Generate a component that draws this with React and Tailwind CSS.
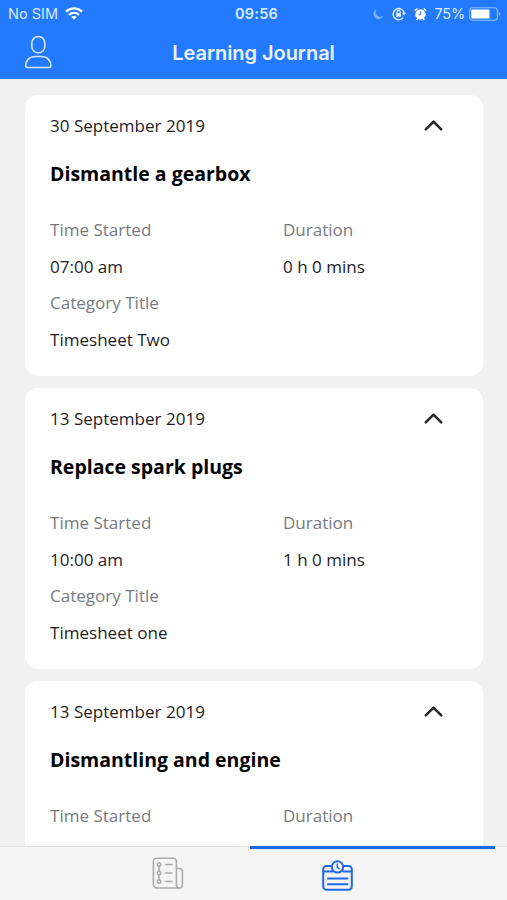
import React from 'react';
import { ChevronUp } from 'lucide-react';

const entries = [
    { id: 1, date: '30 September 2019', title: 'Dismantle a gearbox', started: '07:00 am', duration: '0 h 0 mins', category: 'Timesheet Two' },
    { id: 2, date: '13 September 2019', title: 'Replace spark plugs', started: '10:00 am', duration: '1 h 0 mins', category: 'Timesheet one' },
    { id: 3, date: '13 September 2019', title: 'Dismantling and engine' },
];

const StatusBar = () => (
    <div className="h-7 grid grid-cols-3 items-center pl-2 pr-[6px] text-[14.5px] leading-none text-[#d9e9ff]">
        <div className="flex items-center gap-[7px]">
            <span className="whitespace-nowrap">No SIM</span>
            <svg className="-mt-[2px]" width="18" height="13" viewBox="0 0 18 13" fill="none" stroke="#fff" strokeWidth="2.3">
                <path d="M1 4.6C5.5.3 12.5.3 17 4.6" />
                <path d="M4 7.9c2.9-2.6 7.1-2.6 10 0" />
                <path d="M9 12.6 6.3 10c1.5-1.5 3.9-1.5 5.4 0z" fill="#fff" stroke="none" />
            </svg>
        </div>
        <span className="text-center font-semibold tracking-[0.2px] pl-[4px]">09:56</span>
        <div className="flex items-center justify-end">
            <svg className="mr-[8px] shrink-0" width="11" height="12" viewBox="0 0 11 12" fill="#7db2ff">
                <path d="M3.6 1A5.2 5.2 0 1 0 10.4 8 5 5 0 0 1 3.6 1z" />
            </svg>
            <svg className="-mt-px mr-[8px] shrink-0" width="14" height="14" viewBox="0 0 14 14" fill="none" stroke="#e3efff" strokeWidth="1.4">
                <path d="M11.2 10.6A5.6 5.6 0 1 1 12.2 5.8" />
                <path d="M9.8 5.7h4.2l-2 2.8z" fill="#e3efff" stroke="none" />
                <path d="M5 6V5a1.6 1.6 0 0 1 3.2 0v1" strokeWidth="1.1" />
                <rect x="4.2" y="6" width="4.8" height="3.8" rx=".5" fill="#e3efff" stroke="none" />
            </svg>
            <svg className="-mt-px mr-[7px] shrink-0" width="13" height="14" viewBox="0 0 13 14" fill="#fff">
                <circle cx="6.5" cy="7.4" r="5.2" />
                <path d="M.8 3.8 3.3 1.5M12.2 3.8 9.7 1.5M2.6 13l1.2-1.6M10.4 13l-1.2-1.6" stroke="#fff" strokeWidth="1.5" />
                <path d="M6.7 4.3v3.4H4.4" fill="none" stroke="#247aff" strokeWidth="1" />
            </svg>
            <span className="mr-[4px] tracking-[-0.2px]">75%</span>
            <svg className="-mt-px shrink-0" width="32" height="14" viewBox="0 0 32 14">
                <rect x=".7" y=".7" width="27.6" height="12.6" rx="3" fill="none" stroke="#8fbcff" strokeWidth="1.1" />
                <rect x="2.3" y="2.4" width="18.2" height="9.2" rx="1" fill="#fff" />
                <path d="M29.8 4.8c1.8.7 1.8 3.7 0 4.4z" fill="#8fbcff" />
            </svg>
        </div>
    </div>
);

const Header = () => (
    <header className="h-[79px] shrink-0 bg-[#247aff] font-['Inter',sans-serif]">
        <StatusBar />
        <div className="h-12 grid grid-cols-[1fr_auto_1fr] items-center text-white">
            <button className="ml-[24px] w-[28px]" aria-label="Profile">
                <svg width="28" height="34" viewBox="0 0 28 34" fill="none" stroke="#d5e6ff" strokeWidth="1.6">
                    <rect x="7.8" y="1.5" width="13" height="16.4" rx="6.5" />
                    <path d="M3.3 32.5h22c1.1 0 1.6-.6 1.6-1.5 0-5.6-3.6-9.5-9.6-9.5h-6c-6 0-9.6 3.9-9.6 9.5 0 .9.5 1.5 1.6 1.5z" />
                </svg>
            </button>
            <h1 className="pt-px text-[20px] leading-none font-semibold tracking-[-0.05px] text-[#eaf3ff]">Learning Journal</h1>
        </div>
    </header>
);

const Field = ({ label, value }) => (
    <div className="leading-[36.6px]">
        <div className="text-[#777b81]">{label}</div>
        {value && <div>{value}</div>}
    </div>
);

const EntryCard = ({ entry }) => (
    <article className="h-[281px] shrink-0 rounded-[13px] bg-white px-[25px] pt-[19px] text-[17.05px] text-[#1d1d1f]">
        <div className="h-6 flex items-center justify-between">
            <span>{entry.date}</span>
            <ChevronUp className="mr-[9px] mb-px w-[31px] h-[31px] text-[#24272c]" strokeWidth={2} />
        </div>
        <h2 className="mt-6 h-6 leading-6 text-[19.5px] font-bold text-black">{entry.title}</h2>
        <div className="mt-[26px] grid grid-cols-[233px_1fr]">
            <Field label="Time Started" value={entry.started} />
            <Field label="Duration" value={entry.duration} />
            {entry.category && <Field label="Category Title" value={entry.category} />}
        </div>
    </article>
);

const TabBar = () => (
    <nav className="h-[54px] shrink-0 bg-[#f5f5f5] border-t border-[#e3e3e3] flex pl-[86px] pr-3">
        <button className="w-[164px] flex items-start justify-center pt-[10px] pr-px" aria-label="Tasks">
            <svg width="32" height="32" viewBox="0 0 32 32" fill="none" stroke="#a9abad" strokeWidth="1.6" strokeLinecap="round">
                <path d="M25 31H5a3.6 3.6 0 0 1-3.6-3.6V4A2.8 2.8 0 0 1 4.2 1.2H21A3.4 3.4 0 0 1 24.4 4.6V28a3 3 0 0 0 6 0V14.5a3 3 0 0 0-3-3h-3" />
                <path d="M27.4 31H25" />
                <path d="M7 9.5v4.5M7 18v4.5" />
                <circle cx="7" cy="7.5" r="1.7" />
                <circle cx="7" cy="16" r="1.7" />
                <circle cx="7" cy="24.5" r="1.7" />
                <path d="M13.5 7.5h6.5M13.5 16h6.5M13.5 24.5h6.5" />
            </svg>
        </button>
        <button className="flex-1 -mt-px flex items-start border-t-[3px] border-[#1a68ea] pt-[11px] pl-[72px]" aria-label="Journal">
            <svg width="31" height="33" viewBox="0 0 31 33" fill="none" stroke="#1f68ea" strokeWidth="2" strokeLinecap="round">
                <path d="M9 6H4.5A3.3 3.3 0 0 0 1.2 9.3V26.5a3.3 3.3 0 0 0 3.3 3.3h22a3.3 3.3 0 0 0 3.3-3.3V9.3A3.3 3.3 0 0 0 26.5 6H22" />
                <path d="M1.5 11.5h8.5M21 11.5h8.5M6 18.5h19.5M6 24.2h19.5" />
                <circle cx="15.5" cy="6.9" r="5.7" />
                <path d="M15.3 4v3.3l1.7 1.5" strokeWidth="1.5" />
            </svg>
        </button>
    </nav>
);

const App = () => (
    <div className="h-[900px] w-[507px] flex flex-col overflow-hidden bg-[#f1f1f1]">
        <Header />
        <main className="flex-1 min-h-0 overflow-hidden flex flex-col gap-[12px] pt-4 pl-[25px] pr-6 font-['Open_Sans',sans-serif]">
            {entries.map((entry) => (
                <EntryCard key={entry.id} entry={entry} />
            ))}
        </main>
        <TabBar />
    </div>
);

export default App;
